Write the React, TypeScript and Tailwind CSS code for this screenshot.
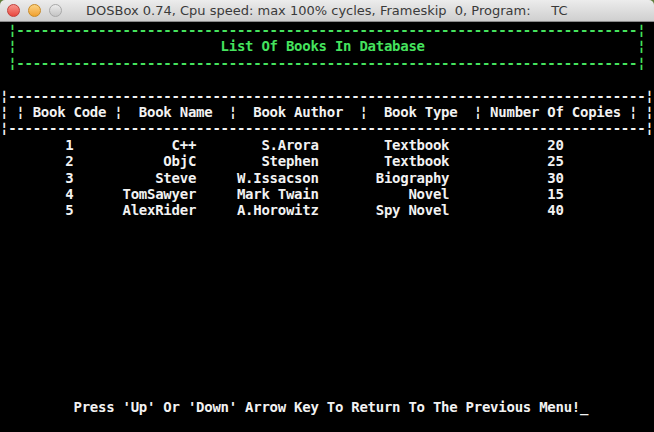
const dash = (n: number) => '-'.repeat(n)

const books = [
  { code: '1', name: 'C++', author: 'S.Arora', type: 'Textbook', copies: '20' },
  { code: '2', name: 'ObjC', author: 'Stephen', type: 'Textbook', copies: '25' },
  { code: '3', name: 'Steve', author: 'W.Issacson', type: 'Biography', copies: '30' },
  { code: '4', name: 'TomSawyer', author: 'Mark Twain', type: 'Novel', copies: '15' },
  { code: '5', name: 'AlexRider', author: 'A.Horowitz', type: 'Spy Novel', copies: '40' },
]

const titleRows = [
  ' ¦' + dash(76) + '¦',
  ' ¦' + ' '.repeat(25) + 'List Of Books In Database' + ' '.repeat(26) + '¦',
  ' ¦' + dash(76) + '¦',
]

const headerRows = [
  '',
  '¦' + dash(78) + '¦',
  '¦ ¦ Book Code ¦  Book Name  ¦  Book Author  ¦  Book Type  ¦ Number Of Copies ¦ ¦',
  '¦' + dash(78) + '¦',
]

const dataRows = books.map(
  (b) =>
    b.code.padStart(9) +
    b.name.padStart(15) +
    b.author.padStart(15) +
    b.type.padStart(16) +
    ' '.repeat(12) +
    b.copies
)

function Line({ text, green }: { text: string; green?: boolean }) {
  return (
    <div
      className={`h-[16.4px] whitespace-pre leading-[16.4px] ${green ? 'text-[#45e35e]' : 'text-[#f2f2f2]'}`}
    >
      {text || ' '}
    </div>
  )
}

export default function App() {
  const blank = Array.from({ length: 11 }, () => '')

  return (
    <div className="h-[432px] w-[654px] overflow-hidden bg-[#5f7d3c]">
      {/* Title bar */}
      <div className="relative flex h-[22px] items-center rounded-t-[5px] border-b border-[#8a8a8a] bg-gradient-to-b from-[#ececec] to-[#cfcfcf]">
        <div className="ml-[7px] flex gap-[8px]">
          <span className="h-[13px] w-[13px] rounded-full border border-[#c2403a] bg-gradient-to-b from-[#f7938c] to-[#e8463e]" />
          <span className="h-[13px] w-[13px] rounded-full border border-[#c98a26] bg-gradient-to-b from-[#fbd27f] to-[#f0a12c]" />
          <span className="h-[13px] w-[13px] rounded-full border border-[#a8a8a8] bg-gradient-to-b from-[#ececec] to-[#c4c4c4]" />
        </div>
        <div className="ml-[24px] whitespace-pre text-[13px] text-[#3a3a3a] [font-family:'DejaVu_Sans',sans-serif]">
          DOSBox 0.74, Cpu speed: max 100% cycles, Frameskip  0, Program:     TC
        </div>
      </div>

      {/* DOS screen */}
      <div className="flex h-[410px] flex-col bg-black text-[14px] font-bold tracking-[-0.26px] [font-family:'DejaVu_Sans_Mono','Liberation_Mono',monospace]">
        {titleRows.map((t, i) => (
          <Line key={'t' + i} text={t} green />
        ))}
        {headerRows.map((t, i) => (
          <Line key={'h' + i} text={t} />
        ))}
        {dataRows.map((t, i) => (
          <Line key={'d' + i} text={t} />
        ))}
        {blank.map((t, i) => (
          <Line key={'b' + i} text={t} />
        ))}
        <Line text={"         Press 'Up' Or 'Down' Arrow Key To Return To The Previous Menu!_"} />
      </div>
    </div>
  )
}
